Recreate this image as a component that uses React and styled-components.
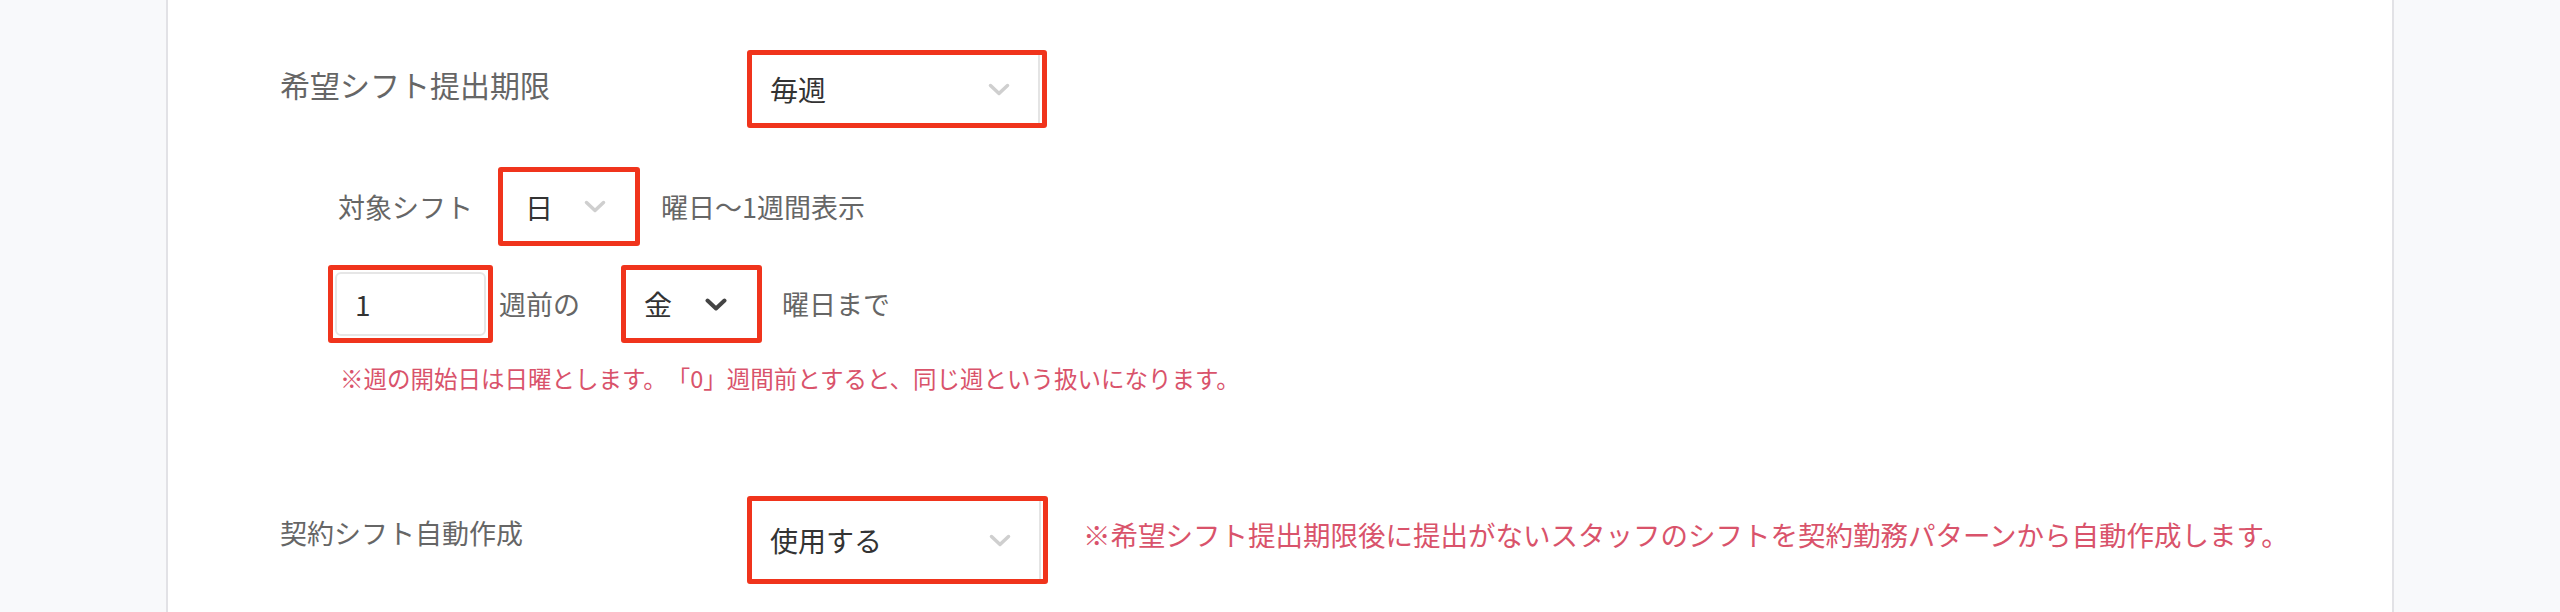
import React from 'react';
import styled, { createGlobalStyle } from 'styled-components';

const GlobalStyle = createGlobalStyle`
  body {
    margin: 0;
    background: #f8f9fb;
    font-family: "Noto Sans CJK JP", "Noto Sans", sans-serif;
  }
`;

const Page = styled.div`
  display: flex;
  justify-content: center;
  height: 612px;
  overflow: hidden;
`;

const Panel = styled.div`
  width: 2228px;
  box-sizing: border-box;
  background: #fff;
  border-left: 2px solid #e2e2e6;
  border-right: 2px solid #e2e2e6;
  padding: 50px 0 0 112px;
`;

const Row = styled.div`
  display: grid;
  grid-template-columns: 467px auto 1fr;
  align-items: start;
  margin-top: ${(p) => p.top || 0}px;
`;

const Label = styled.div`
  font-size: ${(p) => p.size || 30}px;
  line-height: 45px;
  color: #666;
  padding-top: ${(p) => p.pad || 12}px;
  white-space: nowrap;
`;

const SubRow = styled.div`
  display: flex;
  align-items: center;
  padding-left: ${(p) => p.indent}px;
  margin-top: ${(p) => p.top}px;
`;

const Text = styled.span`
  font-size: 27px;
  line-height: 40px;
  color: #666;
  margin-left: ${(p) => p.left || 0}px;
  margin-right: ${(p) => p.right || 0}px;
`;

const Highlight = styled.div`
  position: relative;
  box-sizing: border-box;
  width: ${(p) => p.w}px;
  height: ${(p) => p.h}px;
  border: 5px solid #f0341c;
  border-radius: 3px;
  background: #fff;
  display: flex;
  align-items: center;
  padding: 0 ${(p) => p.pr || 26}px 0 ${(p) => p.pl || 18}px;
  &::after {
    content: '';
    position: absolute;
    top: 0;
    bottom: 0;
    right: 2px;
    width: 2px;
    background: ${(p) => (p.inner ? '#e4e4e4' : 'transparent')};
  }
`;

const InputInner = styled.div`
  position: absolute;
  inset: 2px;
  border: 2px solid #e6e6e6;
  border-radius: 6px;
`;

const Value = styled.span`
  position: relative;
  flex: 1;
  font-size: 28px;
  color: #333;
`;

const Note = styled.div`
  font-size: ${(p) => p.size}px;
  line-height: 1.5;
  color: #d9536b;
  padding-left: ${(p) => p.indent || 0}px;
  margin-top: ${(p) => p.top || 0}px;
  padding-top: ${(p) => p.pad || 0}px;
  white-space: nowrap;
  text-spacing-trim: space-all;
`;

const Chevron = ({ dark }) => (
  <svg width="22" height="13" viewBox="0 0 22 13" style={{ position: 'relative' }}>
    <polyline
      points="2.5,2.5 11,10.5 19.5,2.5"
      fill="none"
      stroke={dark ? '#444' : '#cfcfcf'}
      strokeWidth={dark ? 4 : 3.5}
      strokeLinecap="round"
      strokeLinejoin="round"
    />
  </svg>
);

const Select = ({ value, w, h, dark, pl, pr, inner }) => (
  <Highlight w={w} h={h} pl={pl} pr={pr} inner={inner}>
    <Value>{value}</Value>
    <Chevron dark={dark} />
  </Highlight>
);

export default function App() {
  return (
    <>
      <GlobalStyle />
      <Page>
        <Panel>
          <Row>
            <Label>希望シフト提出期限</Label>
            <Select value="毎週" w={300} h={78} pr={32} inner />
          </Row>

          <SubRow indent={58} top={39}>
            <Text right={25}>対象シフト</Text>
            <Select value="日" w={142} h={79} pl={22} pr={29} />
            <Text left={21}>曜日〜1週間表示</Text>
          </SubRow>

          <SubRow indent={48} top={19}>
            <Highlight w={165} h={78} pl={22}>
              <InputInner />
              <Value>1</Value>
            </Highlight>
            <Text left={6} right={41}>週前の</Text>
            <Select value="金" w={141} h={78} pl={18} pr={30} dark />
            <Text left={20}>曜日まで</Text>
          </SubRow>

          <Note size={23.5} indent={60} top={18}>
            ※週の開始日は日曜とします。「0」週間前とすると、同じ週という扱いになります。
          </Note>

          <Row top={100}>
            <Label size={27} pad={14}>契約シフト自動作成</Label>
            <Select value="使用する" w={301} h={88} pr={32} inner />
            <Note size={27.5} indent={35} pad={18}>
              ※希望シフト提出期限後に提出がないスタッフのシフトを契約勤務パターンから自動作成します。
            </Note>
          </Row>
        </Panel>
      </Page>
    </>
  );
}
